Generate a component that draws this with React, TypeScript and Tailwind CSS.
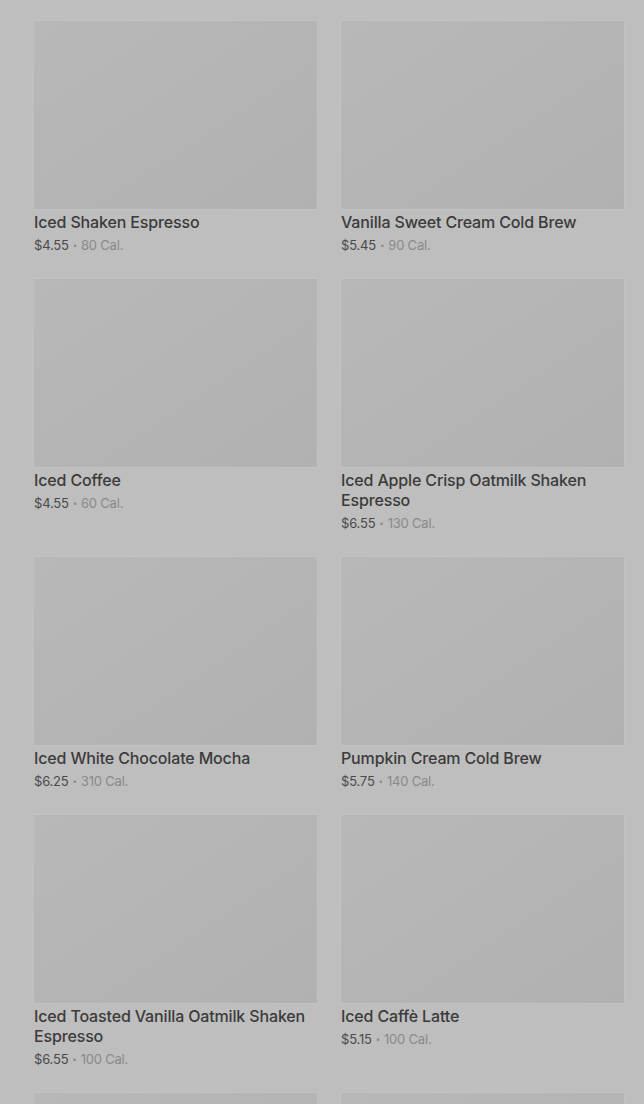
import React from "react";

type Item = { name: string; price: string; cal: string };

const items: Item[] = [
  { name: "Iced Shaken Espresso", price: "$4.55", cal: "80 Cal." },
  { name: "Vanilla Sweet Cream Cold Brew", price: "$5.45", cal: "90 Cal." },
  { name: "Iced Coffee", price: "$4.55", cal: "60 Cal." },
  { name: "Iced Apple Crisp Oatmilk Shaken Espresso", price: "$6.55", cal: "130 Cal." },
  { name: "Iced White Chocolate Mocha", price: "$6.25", cal: "310 Cal." },
  { name: "Pumpkin Cream Cold Brew", price: "$5.75", cal: "140 Cal." },
  { name: "Iced Toasted Vanilla Oatmilk Shaken Espresso", price: "$6.55", cal: "100 Cal." },
  { name: "Iced Caffè Latte", price: "$5.15", cal: "100 Cal." },
];

function Card({ it }: { it?: Item }) {
  return (
    <div className="flex flex-col">
      <div className="h-[188px] w-full bg-gradient-to-br from-[#b8b8b8] to-[#b1b1b1] shadow-[0_0_0_1px_#c2c2c2]" />
      {it && (
        <>
          <div className="mt-[3px] text-[16px] font-medium leading-[20px] tracking-[-0.15px] text-[#3b3b3b]">
            {it.name}
          </div>
          <div className="mt-[3px] flex items-center text-[13px] leading-[20px] tracking-[-0.2px] text-[#4a4a4a]">
            <span>{it.price}</span>
            <span className="mx-[4px] text-[8px] text-[#8a8a8a]">•</span>
            <span className="text-[#8a8a8a]">{it.cal}</span>
          </div>
        </>
      )}
    </div>
  );
}

export default function App() {
  return (
    <div
      className="h-[1104px] w-[644px] overflow-hidden bg-[#bebebe]"
      style={{ fontFamily: "Inter, 'Noto Sans', sans-serif" }}
    >
      <div className="grid grid-cols-2 gap-x-[24px] gap-y-[24px] pl-[34px] pr-[20px] pt-[21px]">
        {items.map((it) => (
          <Card key={it.name} it={it} />
        ))}
        <Card />
        <Card />
      </div>
    </div>
  );
}
